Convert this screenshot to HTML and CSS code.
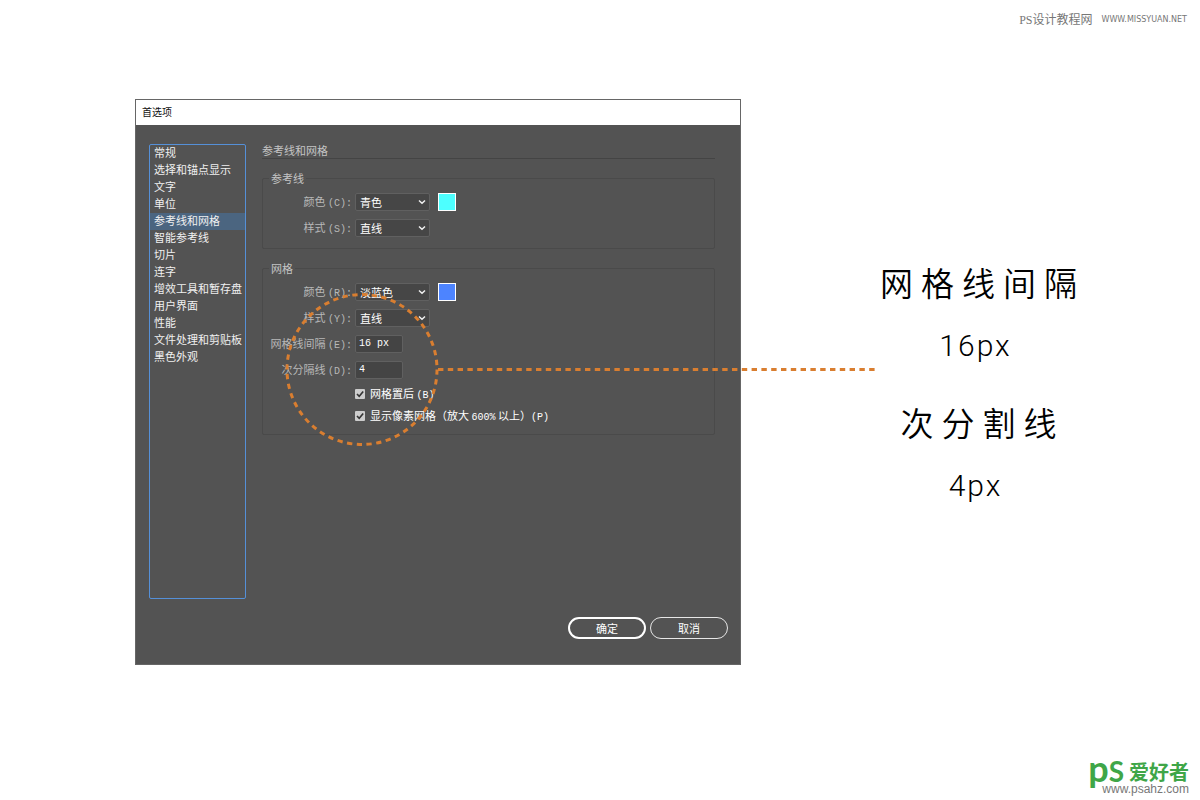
FILE: index.html
```html
<!DOCTYPE html>
<html lang="zh-CN">
<head>
<meta charset="utf-8">
<meta name="viewport" content="width=device-width, initial-scale=1">
<title>首选项 - 参考线和网格</title>
<link rel="stylesheet" href="styles.css">
</head>
<body>
<header class="credit">
  <span class="credit-name"><span class="credit-latin">PS</span>设计教程网</span>
  <a class="credit-url" href="#">WWW.MISSYUAN.NET</a>
</header>

<main class="stage">
  <section class="dialog" aria-labelledby="dialog-title">
    <h1 class="dialog-title" id="dialog-title">首选项</h1>
    <form class="dialog-body">
      <nav class="categories" aria-label="首选项类别">
        <a class="category" href="#">常规</a>
        <a class="category" href="#">选择和锚点显示</a>
        <a class="category" href="#">文字</a>
        <a class="category" href="#">单位</a>
        <a class="category is-active" href="#" aria-current="page">参考线和网格</a>
        <a class="category" href="#">智能参考线</a>
        <a class="category" href="#">切片</a>
        <a class="category" href="#">连字</a>
        <a class="category" href="#">增效工具和暂存盘</a>
        <a class="category" href="#">用户界面</a>
        <a class="category" href="#">性能</a>
        <a class="category" href="#">文件处理和剪贴板</a>
        <a class="category" href="#">黑色外观</a>
      </nav>

      <div class="panel">
        <h2 class="panel-title">参考线和网格</h2>

        <fieldset class="group">
          <legend class="group-title">参考线</legend>
          <div class="rows">
            <div class="row">
              <label class="row-label" for="guide-color">颜色 <span class="key">(C):</span></label>
              <span class="picker">
                <select class="picker-select" id="guide-color"><option>青色</option></select>
                <svg class="picker-arrow" viewBox="0 0 8 6" aria-hidden="true"><path d="M1 1.5 4 4.2 7 1.5"/></svg>
              </span>
              <button class="swatch swatch-cyan" type="button" aria-label="参考线颜色"></button>
            </div>
            <div class="row">
              <label class="row-label" for="guide-style">样式 <span class="key">(S):</span></label>
              <span class="picker">
                <select class="picker-select" id="guide-style"><option>直线</option></select>
                <svg class="picker-arrow" viewBox="0 0 8 6" aria-hidden="true"><path d="M1 1.5 4 4.2 7 1.5"/></svg>
              </span>
            </div>
          </div>
        </fieldset>

        <fieldset class="group">
          <legend class="group-title">网格</legend>
          <div class="rows">
            <div class="row">
              <label class="row-label" for="grid-color">颜色 <span class="key">(R):</span></label>
              <span class="picker">
                <select class="picker-select" id="grid-color"><option>淡蓝色</option></select>
                <svg class="picker-arrow" viewBox="0 0 8 6" aria-hidden="true"><path d="M1 1.5 4 4.2 7 1.5"/></svg>
              </span>
              <button class="swatch swatch-blue" type="button" aria-label="网格颜色"></button>
            </div>
            <div class="row">
              <label class="row-label" for="grid-style">样式 <span class="key">(Y):</span></label>
              <span class="picker">
                <select class="picker-select" id="grid-style"><option>直线</option></select>
                <svg class="picker-arrow" viewBox="0 0 8 6" aria-hidden="true"><path d="M1 1.5 4 4.2 7 1.5"/></svg>
              </span>
            </div>
            <div class="row">
              <label class="row-label" for="grid-gap">网格线间隔 <span class="key">(E):</span></label>
              <input class="number" id="grid-gap" type="text" value="16 px">
            </div>
            <div class="row">
              <label class="row-label" for="grid-sub">次分隔线 <span class="key">(D):</span></label>
              <input class="number" id="grid-sub" type="text" value="4">
            </div>
            <label class="check">
              <span class="check-box">
                <input class="check-input" type="checkbox" checked>
                <svg class="check-mark" viewBox="0 0 10 10" aria-hidden="true"><path d="M2 5 4.2 7.3 8.2 2.4"/></svg>
              </span>
              <span>网格置后 <span class="key">(B)</span></span>
            </label>
            <label class="check">
              <span class="check-box">
                <input class="check-input" type="checkbox" checked>
                <svg class="check-mark" viewBox="0 0 10 10" aria-hidden="true"><path d="M2 5 4.2 7.3 8.2 2.4"/></svg>
              </span>
              <span>显示像素网格（放大 <span class="key">600%</span> 以上）<span class="key">(P)</span></span>
            </label>
          </div>
        </fieldset>
      </div>

      <div class="actions">
        <button class="action action-primary" type="button">确定</button>
        <button class="action" type="button">取消</button>
      </div>
    </form>

    <svg class="callout" width="592" height="156" viewBox="0 0 592 156" aria-hidden="true">
      <circle cx="78" cy="77.5" r="75" pathLength="480"/>
      <path d="M154 77.5H591"/>
    </svg>
  </section>

  <aside class="notes">
    <p class="note-name">网格线间隔</p>
    <p class="note-value">16px</p>
    <p class="note-name">次分割线</p>
    <p class="note-value">4px</p>
  </aside>
</main>

<footer class="brand">
  <div class="brand-top">
    <span class="brand-mark"><span class="brand-p">p</span><span class="brand-s">S</span></span>
    <span class="brand-name">爱好者</span>
  </div>
  <a class="brand-url" href="#">www.psahz.com</a>
</footer>
</body>
</html>
```

FILE: styles.css
```css
* {
  box-sizing: border-box;
}

body {
  margin: 0;
  min-height: 100vh;
  display: flex;
  flex-direction: column;
  background: #fff;
  color: #000;
  font-family: "Liberation Sans", "Noto Sans CJK SC", sans-serif;
}

a {
  color: inherit;
  text-decoration: none;
}

/* Site credit */
.credit {
  display: flex;
  justify-content: flex-end;
  align-items: center;
  gap: 9px;
  padding: 10px 13px 0 0;
  color: #777;
}

.credit-name {
  font: 12px/18px "Noto Sans CJK SC", sans-serif;
}

.credit-latin {
  font-family: "Liberation Serif", serif;
}

.credit-url {
  font: 8px/18px "DejaVu Sans", sans-serif;
}

/* Stage */
.stage {
  display: grid;
  grid-template-columns: 135fr 606fr 459fr;
  align-items: start;
  padding-top: 70px;
}

/* Dialog */
.dialog {
  grid-column: 2;
  position: relative;
  border: 1px solid #666;
  background: #535353;
  color: #f0f0f0;
  font: 11px/14px "Noto Sans CJK SC", sans-serif;
}

.dialog-title {
  margin: 0;
  padding: 0 6px 2px;
  background: #fff;
  color: #111;
  font-size: 10px;
  font-weight: 400;
  line-height: 23px;
}

.dialog-body {
  display: grid;
  grid-template-columns: 97px 1fr;
  column-gap: 16px;
  row-gap: 18px;
  padding: 19px 12px 25px 13px;
}

.categories {
  display: flex;
  flex-direction: column;
  min-height: 455px;
  border: 1px solid #5590d8;
  border-radius: 2px;
}

.category {
  padding: 0 0 2px 4px;
  line-height: 15px;
  white-space: nowrap;
}

.category.is-active {
  background: #4b6580;
}

.panel {
  display: flex;
  flex-direction: column;
  margin-right: 13px;
}

.panel-title {
  margin: 0 0 12px;
  padding-bottom: 2px;
  border-bottom: 1px solid #444;
  color: #c4c4c4;
  font-size: 11px;
  font-weight: 400;
  line-height: 12px;
}

.group {
  min-width: 0;
  margin: 0 0 12px;
  padding: 8px 0 11px;
  border: 1px solid #4a4a4a;
  border-radius: 2px;
}

.group-title {
  margin-left: 6px;
  padding: 0 2px;
  color: #c4c4c4;
}

.rows {
  display: flex;
  flex-direction: column;
  gap: 8px;
}

.row {
  display: flex;
  align-items: center;
  height: 18px;
}

.row-label {
  width: 89px;
  margin-right: 3px;
  color: #b8b8b8;
  text-align: right;
  white-space: nowrap;
}

.key {
  font-family: "Liberation Mono", monospace;
  font-size: 10px;
}

.picker {
  position: relative;
  width: 75px;
  height: 18px;
  margin-right: 8px;
}

.picker-select {
  appearance: none;
  display: block;
  width: 100%;
  height: 100%;
  padding: 0 4px;
  border: 1px solid #606060;
  border-radius: 2px;
  background: #464646;
  color: #fff;
  font: 11px/16px "Noto Sans CJK SC", sans-serif;
}

.picker-arrow {
  position: absolute;
  top: 6px;
  right: 4px;
  width: 8px;
  height: 6px;
  fill: none;
  stroke: #f2f2f2;
  stroke-width: 1.5;
  pointer-events: none;
}

.swatch {
  width: 18px;
  height: 18px;
  padding: 0;
  border: 1px solid #fff;
}

.swatch-cyan {
  background: #4dffff;
}

.swatch-blue {
  background: #4d84ff;
}

.number {
  width: 48px;
  height: 18px;
  padding: 0 3px 2px;
  border: 1px solid #606060;
  border-radius: 2px;
  background: #444;
  color: #fff;
  font: 10px/14px "Liberation Mono", monospace;
}

.check {
  display: flex;
  align-items: center;
  gap: 5px;
  height: 14px;
  padding-left: 92px;
  color: #fff;
  white-space: nowrap;
}

.check-box {
  position: relative;
  width: 10px;
  height: 10px;
}

.check-input {
  appearance: none;
  display: block;
  width: 100%;
  height: 100%;
  margin: 0;
  border-radius: 1px;
  background: #ccc;
}

.check-mark {
  position: absolute;
  inset: 0;
  fill: none;
  stroke: #333;
  stroke-width: 1.6;
  pointer-events: none;
}

.actions {
  grid-column: 1 / -1;
  display: flex;
  justify-content: flex-end;
  gap: 4px;
}

.action {
  width: 78px;
  height: 22px;
  padding: 0;
  border: 1px solid #e6e6e6;
  border-radius: 11px;
  background: transparent;
  color: #fff;
  font: 11px/18px "Noto Sans CJK SC", sans-serif;
}

.action-primary {
  border: 2px solid #fff;
}

/* Dotted ring and leader drawn over the dialog */
.callout {
  position: absolute;
  top: 192px;
  left: 148px;
  fill: none;
  stroke: #d97e30;
  stroke-width: 3;
  stroke-dasharray: 5.4 4.4;
  pointer-events: none;
}

.callout circle {
  stroke-dasharray: 5.4 4.6;
}

/* Notes */
.notes {
  display: flex;
  flex-direction: column;
  align-items: center;
  padding: 158px 0 0 24px;
}

.note-name,
.note-value {
  margin: 0;
  line-height: 50px;
  white-space: nowrap;
}

.note-name {
  margin-bottom: 14px;
  font-family: "Noto Sans CJK SC", sans-serif;
  font-size: 33px;
  font-weight: 350;
  letter-spacing: 8px;
}

.note-value {
  margin-bottom: 26px;
  padding-right: 14px;
  font-family: Roboto, sans-serif;
  font-size: 30px;
  font-weight: 300;
  letter-spacing: 2px;
}

/* Brand */
.brand {
  display: flex;
  flex-direction: column;
  align-items: flex-end;
  margin-top: auto;
  padding: 0 11px 4px 0;
}

.brand-top {
  display: flex;
  align-items: center;
  gap: 5px;
  height: 20px;
  color: #3fa648;
}

.brand-mark {
  font-family: Lato, sans-serif;
  font-weight: 700;
  line-height: 20px;
}

.brand-p {
  font-size: 36px;
}

.brand-s {
  font-size: 28px;
}

.brand-name {
  font: 700 20px/18px "Noto Sans CJK SC", sans-serif;
}

.brand-url {
  color: #777;
  font-size: 12px;
  line-height: 14px;
}
```
